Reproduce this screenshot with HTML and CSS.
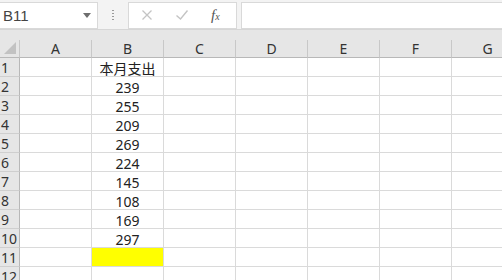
FILE: index.html
```html
<!DOCTYPE html>
<html lang="zh-CN">
<head>
  <meta charset="UTF-8">
  <title>本月支出</title>
  <link rel="stylesheet" href="styles.css">
</head>
<body>

<!-- formula bar -->
<div class="toolbar">
  <div class="namebox">
    <span class="ref">B11</span>
    <svg class="caret" width="8" height="5" viewBox="0 0 8 5"><path d="M0 0h8L4 5z" fill="#6e6e6e"/></svg>
  </div>
  <div class="grip">
    <i></i><i></i><i></i><i></i>
  </div>
  <div class="fxbox">
    <svg class="tool" width="12" height="12" viewBox="0 0 12 12"><path d="M1.5 1.5l9 9M10.5 1.5l-9 9" stroke="#c4c4c4" stroke-width="1.3" fill="none"/></svg>
    <svg class="tool" width="14" height="12" viewBox="0 0 14 12"><path d="M1.5 6.5l4 3.5L12.5 1.5" stroke="#c4c4c4" stroke-width="1.4" fill="none"/></svg>
    <span class="fx">f<small>x</small></span>
  </div>
  <div class="input"></div>
</div>

<div class="gap"></div>

<!-- sheet -->
<div class="sheet">
  <div class="corner"><span class="tri"></span></div>
  <div class="colhead">A</div>
  <div class="colhead">B</div>
  <div class="colhead">C</div>
  <div class="colhead">D</div>
  <div class="colhead">E</div>
  <div class="colhead">F</div>
  <div class="colhead">G</div>

  <div class="rowhead">1</div><div class="cell"></div><div class="cell num">本月支出</div><div class="cell"></div><div class="cell"></div><div class="cell"></div><div class="cell"></div><div class="cell"></div>
  <div class="rowhead">2</div><div class="cell"></div><div class="cell num">239</div><div class="cell"></div><div class="cell"></div><div class="cell"></div><div class="cell"></div><div class="cell"></div>
  <div class="rowhead">3</div><div class="cell"></div><div class="cell num">255</div><div class="cell"></div><div class="cell"></div><div class="cell"></div><div class="cell"></div><div class="cell"></div>
  <div class="rowhead">4</div><div class="cell"></div><div class="cell num">209</div><div class="cell"></div><div class="cell"></div><div class="cell"></div><div class="cell"></div><div class="cell"></div>
  <div class="rowhead">5</div><div class="cell"></div><div class="cell num">269</div><div class="cell"></div><div class="cell"></div><div class="cell"></div><div class="cell"></div><div class="cell"></div>
  <div class="rowhead">6</div><div class="cell"></div><div class="cell num">224</div><div class="cell"></div><div class="cell"></div><div class="cell"></div><div class="cell"></div><div class="cell"></div>
  <div class="rowhead">7</div><div class="cell"></div><div class="cell num">145</div><div class="cell"></div><div class="cell"></div><div class="cell"></div><div class="cell"></div><div class="cell"></div>
  <div class="rowhead">8</div><div class="cell"></div><div class="cell num">108</div><div class="cell"></div><div class="cell"></div><div class="cell"></div><div class="cell"></div><div class="cell"></div>
  <div class="rowhead">9</div><div class="cell"></div><div class="cell num">169</div><div class="cell"></div><div class="cell"></div><div class="cell"></div><div class="cell"></div><div class="cell"></div>
  <div class="rowhead">10</div><div class="cell"></div><div class="cell num">297</div><div class="cell"></div><div class="cell"></div><div class="cell"></div><div class="cell"></div><div class="cell"></div>
  <div class="rowhead">11</div><div class="cell"></div><div class="cell yellow"></div><div class="cell"></div><div class="cell"></div><div class="cell"></div><div class="cell"></div><div class="cell"></div>
  <div class="rowhead">12</div><div class="cell"></div><div class="cell"></div><div class="cell"></div><div class="cell"></div><div class="cell"></div><div class="cell"></div><div class="cell"></div>
</div>

</body>
</html>
```

FILE: styles.css
```css
* {
  margin: 0;
  padding: 0;
  box-sizing: border-box;
}

html, body {
  width: 502px;
  height: 280px;
  overflow: hidden;
}

body {
  font-family: "Noto Sans", "Noto Sans CJK SC", sans-serif;
  background: #e6e6e6;
  color: #222;
}

.toolbar {
  display: flex;
  align-items: center;
  height: 30px;
  padding-top: 1px;
  background: #f3f3f3;
  border-bottom: 1px solid #d6d6d6;
}

.namebox {
  display: flex;
  align-items: center;
  justify-content: space-between;
  width: 98px;
  height: 27px;
  padding: 0 6px 0 3px;
  background: #fff;
  border: 1px solid #d9d9d9;
  border-left: none;
}

.ref {
  font-family: "Liberation Sans", sans-serif;
  font-size: 15px;
  color: #444;
}

.grip {
  display: flex;
  flex-direction: column;
  gap: 2px;
  width: 30px;
  align-items: center;
}

.grip i {
  display: block;
  width: 2px;
  height: 1px;
  background: #9a9a9a;
}

.fxbox {
  display: flex;
  align-items: center;
  gap: 22px;
  width: 109px;
  height: 27px;
  background: #fff;
  border: 1px solid #d9d9d9;
  padding-left: 12px;
}

.fx {
  font-family: "Liberation Serif", serif;
  font-style: italic;
  font-size: 15px;
  color: #555;
}

.fx small {
  font-size: 10px;
}

.input {
  flex: 1;
  height: 27px;
  margin-left: 4px;
  background: #fff;
  border: 1px solid #d9d9d9;
  border-right: none;
}

.gap {
  height: 10px;
}

.sheet {
  display: grid;
  grid-template-columns: 20px repeat(7, 72px);
  grid-template-rows: 18px repeat(12, 19px);
  background: #fff;
}

.corner {
  position: relative;
  background: #e6e6e6;
  border-right: 1px solid #c8c8c8;
  border-bottom: 1px solid #b8b8b8;
}

.tri {
  position: absolute;
  right: 3px;
  bottom: 3px;
  width: 0;
  height: 0;
  border-left: 12px solid transparent;
  border-bottom: 12px solid #c2c2c2;
}

.colhead {
  background: #e6e6e6;
  border-right: 1px solid #c8c8c8;
  border-bottom: 1px solid #b8b8b8;
  font-size: 14px;
  line-height: 18px;
  text-align: center;
  color: #333;
}

.rowhead {
  background: #e6e6e6;
  border-right: 1px solid #b8b8b8;
  border-bottom: 1px solid #cfcfcf;
  font-size: 14px;
  line-height: 18px;
  padding: 1px 0 0 1px;
  color: #333;
}

.cell {
  border-right: 1px solid #dadada;
  border-bottom: 1px solid #dadada;
  font-size: 14px;
  line-height: 18px;
  padding-top: 2px;
}

.num {
  text-align: center;
}

.yellow {
  background: #ffff00;
}
```
